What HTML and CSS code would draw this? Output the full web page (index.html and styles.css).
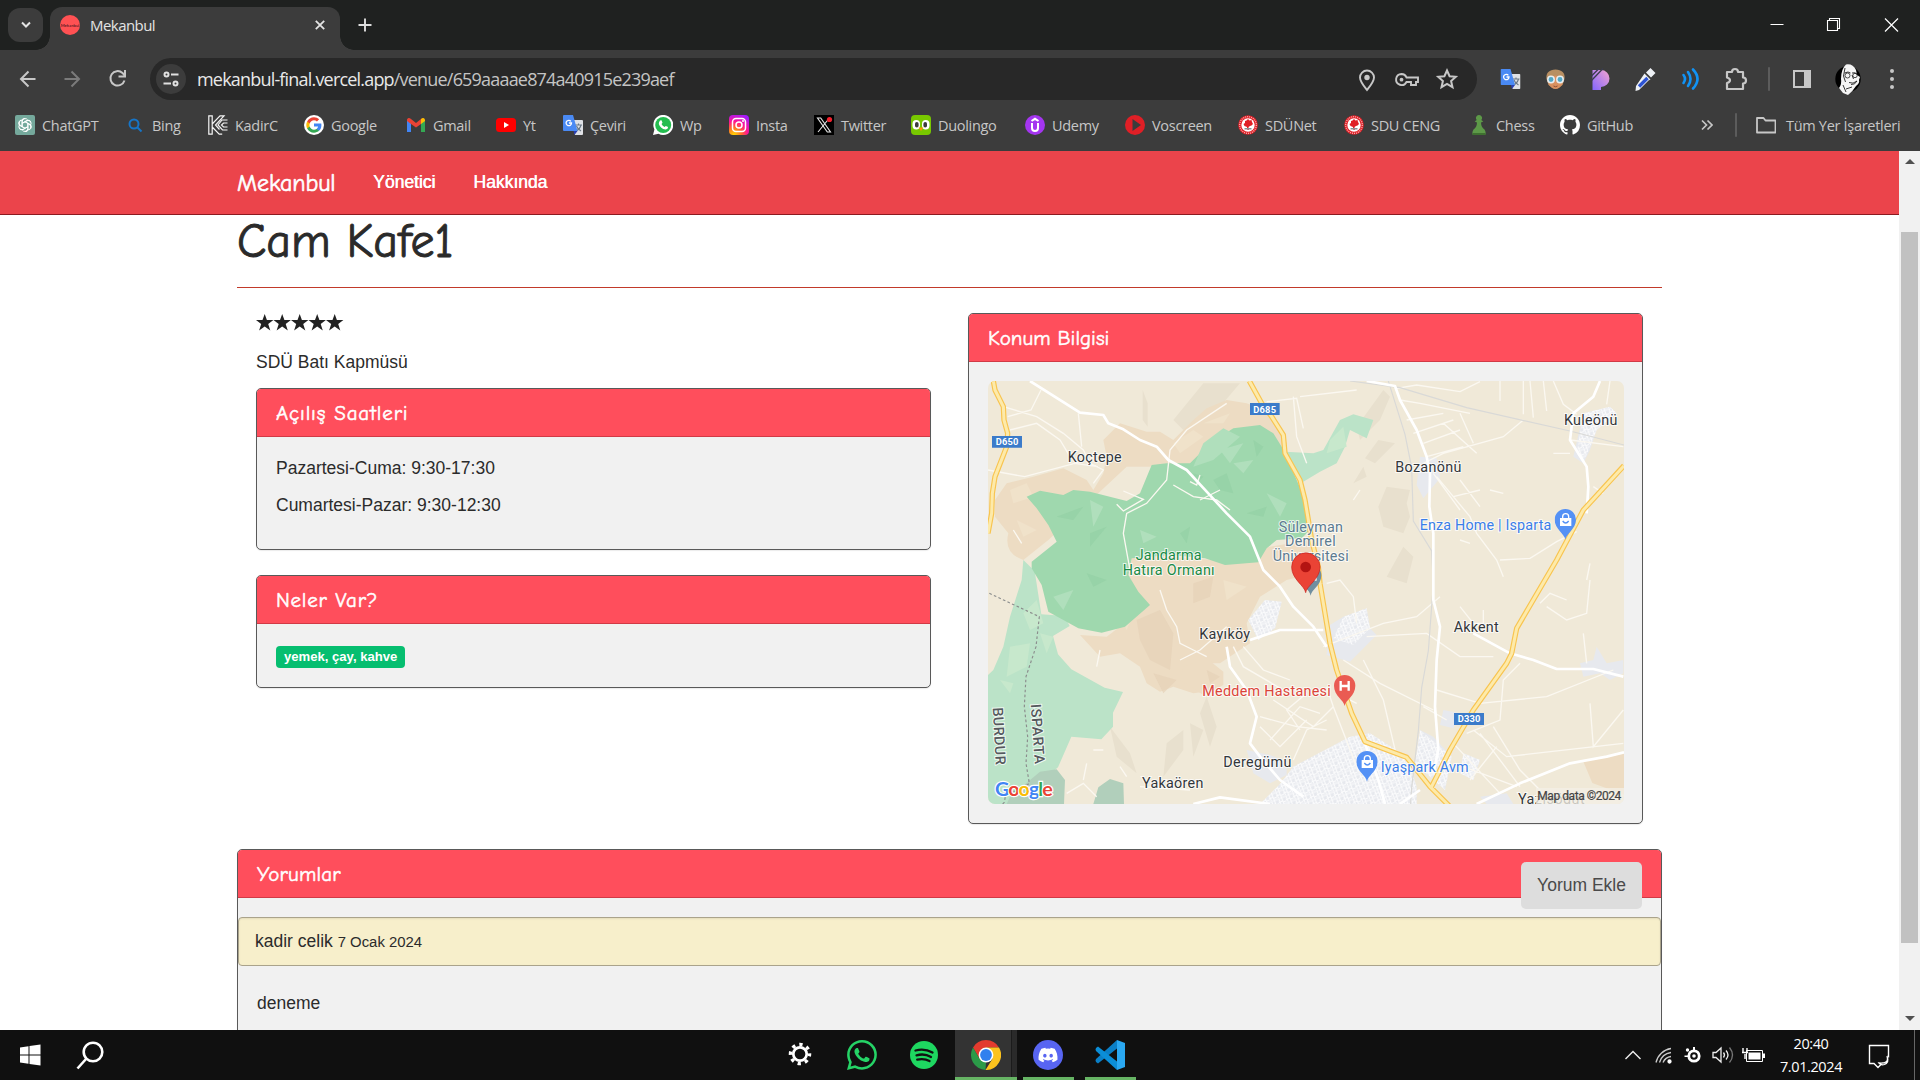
FILE: index.html
```html
<!DOCTYPE html>
<html lang="tr">
<head>
<meta charset="utf-8">
<title>Mekanbul</title>
<link rel="stylesheet" href="styles.css">
</head>
<body>
<svg width="0" height="0" class="defs">
  <symbol id="translate" viewBox="0 0 20 20">
    <path d="M9 5h10a1 1 0 0 1 1 1v13a1 1 0 0 1-1 1h-7z" fill="#dfe1e5"/>
    <path d="M12 10h7M15.5 8.500v1.500M13 16q4-2 5-6M13.500 11q1 3 4.500 5" stroke="#6a7886" stroke-width="1.100" fill="none"/>
    <path d="M1 0h9l4.500 16H1a1 1 0 0 1-1-1V1a1 1 0 0 1 1-1z" fill="#4a8af4"/>
    <path d="M10.500 16h4l-3 4z" fill="#2a3fb0"/>
    <path d="M7.900 6.300A2.700 2.700 0 1 0 8.500 8H6" stroke="#fff" stroke-width="1.300" fill="none"/>
  </symbol>
  <symbol id="sdu" viewBox="0 0 20 20">
    <circle cx="10" cy="10" r="9.800" fill="#e01f26"/><circle cx="10" cy="10" r="8.300" fill="none" stroke="#f6b3b4" stroke-width="1.300" stroke-dasharray="1 1"/>
    <circle cx="10" cy="10" r="6.700" fill="#fff"/>
    <path d="M10 4l1.500 1.500 2-.5.5 2 1 2-1.500 1.500L12 11l-1.500 1 .5 3-2-.5V12L6.500 11 5.500 9l1.500-1V6l1.500-.5z" fill="#e01f26"/>
    <path d="M6.500 13h7v1.500h-7z" fill="#8b8f94"/>
  </symbol>
  <symbol id="whatsapp" viewBox="0 0 16 16"><path d="M13.601 2.326A7.854 7.854 0 0 0 7.994 0C3.627 0 .068 3.558.064 7.926c0 1.399.366 2.760 1.057 3.965L0 16l4.204-1.102a7.933 7.933 0 0 0 3.790.965h.004c4.368 0 7.926-3.558 7.930-7.930A7.898 7.898 0 0 0 13.600 2.326zM7.994 14.521a6.573 6.573 0 0 1-3.356-.92l-.24-.144-2.494.654.666-2.433-.156-.251a6.560 6.560 0 0 1-1.007-3.505c0-3.626 2.957-6.584 6.591-6.584a6.560 6.560 0 0 1 4.660 1.931 6.557 6.557 0 0 1 1.928 4.660c-.004 3.639-2.961 6.592-6.592 6.592zm3.615-4.934c-.197-.099-1.170-.578-1.353-.646-.182-.065-.315-.099-.445.099-.133.197-.513.646-.627.775-.114.133-.232.148-.43.05-.197-.1-.836-.308-1.592-.985-.59-.525-.985-1.175-1.103-1.372-.114-.198-.011-.304.088-.403.087-.088.197-.232.296-.346.1-.114.133-.198.198-.33.065-.134.034-.248-.015-.347-.05-.099-.445-1.076-.612-1.470-.16-.389-.323-.335-.445-.34-.114-.007-.247-.007-.38-.007a.729.729 0 0 0-.529.247c-.182.198-.691.677-.691 1.654 0 .977.710 1.916.810 2.049.098.133 1.394 2.132 3.383 2.992.470.205.840.326 1.129.418.475.152.904.129 1.246.080.380-.058 1.171-.48 1.338-.943.164-.464.164-.86.114-.943-.049-.084-.182-.133-.38-.232z"/></symbol>
  <symbol id="bagpin" viewBox="0 0 64 92">
    <path d="M32 92C30 74 0 60 0 32a32 32 0 0 1 64 0C64 60 34 74 32 92z" fill="#5491f5"/>
    <path d="M16 27h34v24H16z" fill="#fff"/><path d="M24 30v-7a9 9 0 0 1 18 0v7" fill="none" stroke="#fff" stroke-width="4"/><path d="M24 36q9 12 18 0" fill="none" stroke="#5491f5" stroke-width="4"/>
  </symbol>
</svg>

<header class="tabstrip">
  <button class="tab-search"><svg width="10" height="8" viewBox="0 0 10 8"><path d="M1 1.500l4 4 4-4" fill="none" stroke="#e3e3e3" stroke-width="2"/></svg></button>
  <div class="tab">
    <svg width="20" height="20" viewBox="0 0 20 20"><circle cx="10" cy="10" r="10" fill="#ff5153"/><text x="10" y="11.500" font-size="4.200" font-weight="700" text-anchor="middle" font-family="Lato" fill="#6b1f28">Mekanbul</text></svg>
    <span class="tab-title">Mekanbul</span>
    <svg width="10" height="10" viewBox="0 0 10 10"><path d="M.8.800l8.400 8.400M9.200.800L.8 9.200" stroke="#e3e3e3" stroke-width="1.800"/></svg>
  </div>
  <svg class="newtab" width="14" height="14" viewBox="0 0 14 14"><path d="M7 .5v13M.5 7h13" stroke="#dedede" stroke-width="1.900"/></svg>
  <div class="winbtns">
    <svg viewBox="0 0 56 50"><path d="M21 24.500h13" stroke="#fff"/></svg>
    <svg viewBox="0 0 56 50"><path d="M21 20.500h10v10H21zM23 20v-1.500h10v10h-1.500" fill="none" stroke="#fff" stroke-width="1.100"/></svg>
    <svg viewBox="0 0 56 50"><path d="M21.500 18.500l13 13M34.500 18.500l-13 13" stroke="#fff" stroke-width="1.200"/></svg>
  </div>
</header>

<nav class="toolbar">
  <svg class="tool" viewBox="0 0 44 42"><path d="M29.500 21H15M22.500 13.500L15 21l7.500 7.500" fill="none" stroke="#c7c7c7" stroke-width="2"/></svg>
  <svg class="tool" viewBox="0 0 44 42"><path d="M14.500 21H29M21.500 13.500L29 21l-7.500 7.500" fill="none" stroke="#7b7b7b" stroke-width="2"/></svg>
  <svg class="tool" viewBox="0 0 44 42"><path d="M28.500 22.500a7.200 7.200 0 1 1-2-7.500l2 2M29 12v6.500h-6.500" fill="none" stroke="#c7c7c7" stroke-width="2"/></svg>
  <div class="omnibox">
    <span class="site"><svg width="16" height="16" viewBox="0 0 16 16" fill="none" stroke="#e0e0e0" stroke-width="2"><circle cx="3.500" cy="3.500" r="2"/><path d="M8 3.500h7.500M.5 12.500H8"/><circle cx="12.500" cy="12.500" r="2"/></svg></span>
    <span class="url">mekanbul-final.vercel.app<span class="path">/venue/659aaaae874a40915e239aef</span></span>
    <svg class="omni-icon" viewBox="0 0 40 42"><path d="M20 32c-4-5-7-8.500-7-12.500a7 7 0 0 1 14 0c0 4-3 7.500-7 12.500z" fill="none" stroke="#c7c7c7" stroke-width="1.900"/><circle cx="20" cy="19.500" r="2.700" fill="#c7c7c7"/></svg>
    <svg class="omni-icon" viewBox="0 0 40 42"><path d="M14.500 16a5.500 5.500 0 1 0 5 8H24v3h5v-3h2v-4.500H19.500a5.500 5.500 0 0 0-5-3.500z" fill="none" stroke="#c7c7c7" stroke-width="1.900"/><circle cx="14.500" cy="21.700" r="1.900" fill="#c7c7c7"/></svg>
    <svg class="omni-icon" viewBox="0 0 40 42"><path d="M20 12.500l2.600 5.700 6.200.6-4.700 4.200 1.400 6.200L20 26l-5.500 3.200 1.400-6.200-4.700-4.200 6.200-.6z" fill="none" stroke="#c7c7c7" stroke-width="2"/></svg>
  </div>
  <div class="extensions">
    <svg viewBox="0 0 45 42"><use href="#translate" x="12.500" y="11" width="20" height="20"/></svg>
    <svg viewBox="0 0 45 42"><path d="M13.500 21c-1-6 3-9.500 9-9.500s10 3.500 9 9.500l-2 6q-7 7-14 0z" fill="#b88f62"/><path d="M15.500 20q7-5 14 0v6q-3 5-7 5t-7-5z" fill="#d99160"/><circle cx="18" cy="21.500" r="3.200" fill="#53a8c6" stroke="#e8edf0" stroke-width="1.500"/><circle cx="27" cy="21.500" r="3.200" fill="#53a8c6" stroke="#e8edf0" stroke-width="1.500"/><path d="M20.500 28q2 1.500 4 0" stroke="#914f34" fill="none"/></svg>
    <svg viewBox="0 0 45 42"><defs><linearGradient id="pg" x1="0" y1="1" x2="1" y2="0"><stop offset="0" stop-color="#8465ff"/><stop offset="1" stop-color="#f4a5cf"/></linearGradient></defs><path d="M14.500 12h8.500a8.500 8.500 0 0 1 0 17v3h-8.500z" fill="url(#pg)"/><path d="M13.500 18l7-7M13.500 22.500l11.500-12" stroke="#3b3d4f" stroke-width="1.300"/></svg>
    <svg viewBox="0 0 45 42"><path d="M23 14.500l4.500-4.500 5 5-4.500 4.500zM21.500 15.500l6 6-2 1-9.500 9.500-3.500 1 .5-5z" fill="#eef1f6"/><path d="M24.500 20L16 28.500" stroke="#2d53d4" stroke-width="3.400"/></svg>
    <svg viewBox="0 0 45 42" fill="none" stroke="#1193f5" stroke-width="2.600" stroke-linecap="round"><path d="M15.500 17q3 4 0 8M20 14q5 7 0 14M25 11.500q9 9.500 0 19"/></svg>
    <svg viewBox="0 0 45 42"><path d="M14 14h5a3 3 0 0 1 6 0h5v5.500a2.800 2.800 0 0 1 0 6v5.500H14v-6q3-1 3-2.800t-3-2.700z" fill="none" stroke="#c7c7c7" stroke-width="2.200" stroke-linejoin="round"/></svg>
  </div>
  <span class="divider"></span>
  <svg class="panel-icon" viewBox="0 0 40 42"><path d="M12 13h16v16H12z" fill="none" stroke="#c7c7c7" stroke-width="2"/><path d="M22 13h6v16h-6z" fill="#c7c7c7"/></svg>
  <svg class="avatar" viewBox="0 0 26 32"><ellipse cx="13" cy="16" rx="12.700" ry="13" fill="#000"/><path d="M11 1.500q7-1 10 5.500l1 5 3 2-1 3q1 3-3 6-3 5-8 9l-5-2-4-5q3-4 2-9 0-10 5-14.500z" fill="#f5f5f5"/><path d="M9.500 10q4-2 6 0M17 10q3-1 5 1M17 12l1.500 4M14 19.500q4 2 8-1.500-2 4-6 3.500M10 5L8.500 13l2 6M11 26l6-2M8 22l3 7" stroke="#222" stroke-width=".9" fill="none"/><circle cx="12.500" cy="12.500" r="2.500" fill="none" stroke="#222" stroke-width=".8"/><circle cx="20" cy="12.500" r="2.200" fill="none" stroke="#222" stroke-width=".8"/></svg>
  <svg class="dots" viewBox="0 0 20 42" fill="#c7c7c7"><circle cx="10" cy="13" r="2"/><circle cx="10" cy="21" r="2"/><circle cx="10" cy="29" r="2"/></svg>
</nav>

<div class="bookmarks">
  <a><svg viewBox="0 0 20 20"><rect width="20" height="20" rx="2" fill="#75a99c"/><g fill="none" stroke="#fff" stroke-width="1"><path id="petal" d="M7.200 11.500V6.300a3 3 0 0 1 5.600-1.200M7.200 8.200l4.600-2.600a3 3 0 0 1 4 1.200"/><use href="#petal" transform="rotate(60 10 10)"/><use href="#petal" transform="rotate(120 10 10)"/><use href="#petal" transform="rotate(180 10 10)"/><use href="#petal" transform="rotate(240 10 10)"/><use href="#petal" transform="rotate(300 10 10)"/></g></svg>ChatGPT</a>
  <a><svg viewBox="0 0 20 20" fill="none" stroke="#1675c8" stroke-width="2"><circle cx="9" cy="9" r="4.500"/><path d="M12.500 12.500l4 4"/></svg>Bing</a>
  <a><svg viewBox="0 0 20 20" fill="none" stroke="#f5f5f5" stroke-width="1.200"><path d="M.8.800h3.400v18.400H.8zM4.200 9L12 .8h4L7.500 10l4 4.500M4.200 12l7 7.200h3M19.500 5H14l-4 5 4.500 5h5M19.500 8h-4l-2 2 2 2h4"/></svg>KadirC</a>
  <a><svg viewBox="0 0 20 20"><circle cx="10" cy="10" r="10" fill="#fff"/><g transform="translate(1.600 1.600) scale(.7)"><path d="M22.560 12.250c0-.78-.07-1.530-.2-2.250H12v4.260h5.920c-.26 1.370-1.040 2.530-2.210 3.310v2.770h3.570c2.080-1.920 3.280-4.740 3.280-8.090z" fill="#4285f4"/><path d="M12 23c2.970 0 5.460-.98 7.280-2.660l-3.570-2.770c-.98.660-2.230 1.060-3.710 1.060-2.860 0-5.290-1.930-6.160-4.530H2.180v2.840C3.990 20.530 7.700 23 12 23z" fill="#34a853"/><path d="M5.840 14.090c-.22-.66-.35-1.360-.35-2.090s.13-1.430.35-2.090V7.070H2.180C1.430 8.550 1 10.220 1 12s.43 3.450 1.180 4.930z" fill="#fbbc05"/><path d="M12 5.380c1.620 0 3.060.56 4.210 1.640l3.150-3.150C17.450 2.090 14.970 1 12 1 7.700 1 3.990 3.470 2.180 7.070l3.660 2.840c.87-2.600 3.300-4.530 6.160-4.530z" fill="#ea4335"/></g></svg>Google</a>
  <a><svg viewBox="0 0 20 20"><path d="M1 5v12h4V8z" fill="#4285f4"/><path d="M15 8v9h4V5z" fill="#34a853"/><path d="M1 6V4.500Q2.500 2 5 4l5 4 5-4q2-1 3 0l-3 5-5 3.500L5 9z" fill="#ea4335"/><path d="M15 9V4q2.500-2 4 .5V6z" fill="#fbbc05"/></svg>Gmail</a>
  <a><svg viewBox="0 0 20 20"><rect y="3" width="20" height="14" rx="3.500" fill="#f00"/><path d="M8 7l5 3-5 3z" fill="#fff"/></svg>Yt</a>
  <a><svg viewBox="0 0 20 20"><use href="#translate"/></svg>Çeviri</a>
  <a><svg viewBox="0 0 20 20"><path d="M0 20L1.400 14.500A10 10 0 1 1 5.500 18.700z" fill="#fff"/><circle cx="10.200" cy="10" r="8" fill="#23bd4f"/><path d="M7 5.500l1.500-.2 1 2.500-1 1.300q1 2 3 3l1.300-1.200 2.300 1.200q0 2.500-2.600 2.400-5-.7-6.700-5.500Q5.700 7 7 5.500z" fill="#fff"/></svg>Wp</a>
  <a><svg viewBox="0 0 20 20"><defs><radialGradient id="ig" cx=".25" cy="1" r="1.100"><stop offset="0" stop-color="#fd0"/><stop offset=".35" stop-color="#ff6a2b"/><stop offset=".62" stop-color="#ff1493"/><stop offset="1" stop-color="#a21aff"/></radialGradient></defs><rect width="20" height="20" rx="4" fill="url(#ig)"/><rect x="3.500" y="3.500" width="13" height="13" rx="3.500" fill="none" stroke="#fff" stroke-width="1.500"/><circle cx="10" cy="10" r="3" fill="none" stroke="#fff" stroke-width="1.500"/><circle cx="14" cy="6" r="1" fill="#fff"/></svg>Insta</a>
  <a><svg viewBox="0 0 20 20"><path d="M0 0h20v20H0z"/><path d="M3.500 3h3.200l9.800 14h-3.200zM15.500 3L4 17" fill="none" stroke="#e7e7e7" stroke-width="1.100"/><circle cx="15.500" cy="4.500" r="2.600" fill="#f4212e"/></svg>Twitter</a>
  <a><svg viewBox="0 0 20 20"><rect width="20" height="20" rx="4" fill="#78c800"/><rect x="1.500" y="5" width="7.500" height="9.500" rx="3.700" fill="#fff"/><rect x="11" y="5" width="7.500" height="9.500" rx="3.700" fill="#fff"/><rect x="4" y="7" width="3.600" height="5.500" rx="1.800" fill="#3c3c3c"/><rect x="12.400" y="7" width="3.600" height="5.500" rx="1.800" fill="#3c3c3c"/><path d="M7.500 12.500h5L10 16z" fill="#ff9600"/></svg>Duolingo</a>
  <a><svg viewBox="0 0 20 20"><circle cx="10" cy="10" r="10" fill="#a435f0"/><path d="M7 8v5q0 3 3 3t3-3V8M6.500 6L10 3.800 13.500 6" fill="none" stroke="#fff" stroke-width="2"/></svg>Udemy</a>
  <a><svg viewBox="0 0 20 20"><circle cx="10" cy="10" r="10" fill="#e01f26"/><path d="M7.500 4l8.500 6-8.500 6z" fill="#3c3c3c"/></svg>Voscreen</a>
  <a><svg viewBox="0 0 20 20"><use href="#sdu"/></svg>SDÜNet</a>
  <a><svg viewBox="0 0 20 20"><use href="#sdu"/></svg>SDU CENG</a>
  <a><svg viewBox="0 0 20 20"><path d="M10 0a3 3 0 0 1 2.300 5l2 1.500-2.300 1q.2 5 3.500 7 1.500 2 1 5h-13q-.5-3 1-5 3.300-2 3.500-7l-2.300-1 2-1.500A3 3 0 0 1 10 0z" fill="#5d9948"/><path d="M3.500 18h13v2h-13z" fill="#3f7030"/></svg>Chess</a>
  <a><svg viewBox="0 0 16 16"><path fill="#fff" d="M8 0C3.580 0 0 3.580 0 8c0 3.540 2.290 6.530 5.470 7.590.4.070.55-.17.55-.38 0-.19-.01-.82-.01-1.490-2.010.37-2.530-.49-2.690-.94-.09-.23-.48-.94-.82-1.130-.28-.15-.68-.52-.01-.53.630-.01 1.080.58 1.230.82.720 1.210 1.870.87 2.330.66.070-.52.280-.87.510-1.070-1.780-.2-3.640-.89-3.640-3.950 0-.87.310-1.590.82-2.150-.08-.2-.36-1.020.08-2.120 0 0 .67-.21 2.200.82.640-.18 1.320-.27 2-.27.680 0 1.360.09 2 .27 1.530-1.040 2.200-.82 2.200-.82.440 1.100.16 1.920.08 2.120.510.56.82 1.270.82 2.150 0 3.070-1.870 3.750-3.650 3.950.29.25.54.73.54 1.480 0 1.070-.01 1.930-.01 2.200 0 .21.15.46.55.38A8.013 8.013 0 0 0 16 8c0-4.420-3.580-8-8-8z"/></svg>GitHub</a>
  <svg class="more" viewBox="0 0 12 12"><path d="M1 1.500L5.500 6 1 10.500M6.500 1.500L11 6l-4.500 4.500" fill="none" stroke="#c7c7c7" stroke-width="1.700"/></svg>
  <span class="divider"></span>
  <a class="all"><svg viewBox="0 0 20 20"><path d="M1 3h6.500l2 2.500h10V17.500H1z" fill="none" stroke="#c7c7c7" stroke-width="1.800" stroke-linejoin="round"/></svg>Tüm Yer İşaretleri</a>
</div>

<div class="viewport">
  <main class="page">
    <nav class="navbar"><div class="container nav-inner">
      <a class="brand">Mekanbul</a><a class="navlink">Yönetici</a><a class="navlink">Hakkında</a>
    </div></nav>
    <div class="container">
      <h1>Cam Kafe1</h1>
      <div class="venue">
        <div class="info">
          <svg class="stars" width="88" height="17" viewBox="0 0 88 17"><defs><path id="star" d="M8.700 0l2.200 5.900h6.500l-5.200 4 2.100 6.700-5.600-4-5.600 4 2.100-6.700-5.200-4h6.500z"/></defs><g fill="#222"><use href="#star"/><use href="#star" x="17.500"/><use href="#star" x="35"/><use href="#star" x="52.500"/><use href="#star" x="70"/></g></svg>
          <p class="address">SDÜ Batı Kapmüsü</p>
          <section class="panel hours"><h2>Açılış Saatleri</h2><div class="panel-body"><p>Pazartesi-Cuma: 9:30-17:30</p><p>Cumartesi-Pazar: 9:30-12:30</p></div></section>
          <section class="panel foods"><h2>Neler Var?</h2><div class="panel-body"><span class="label">yemek, çay, kahve</span></div></section>
        </div>
        <section class="panel location"><h2>Konum Bilgisi</h2><div class="panel-body">
          <svg class="map" viewBox="84 243 1908 1269" preserveAspectRatio="none">
            <defs><pattern id="streets" width="23" height="21" patternUnits="userSpaceOnUse" patternTransform="rotate(-22)"><path d="M0 3h23M0 13h13M13 0v21M4 3v18M13 17h10" fill="none" stroke="#fff" stroke-width="3.500"/></pattern></defs>
            <path fill="#f0e9d8" d="M84 243h1908v1269H84z"/>
            <g fill="#e8e0ce">
              <path d="M640 360l90-110h110l-60 70-110 70zM548 270l15 40v70l-15-20zM1270 270l-80 110 10 40 60-60 30-70zM1280 560l70 10-10 40 10 40-20 50-60-20-15-60zM1255 420l50 10-60 60-30-15zM1330 740l30 30-20 80-60-20zM450 1280l60 80 20 60-60-50zM620 1330l50-40v60l-60 80zM740 1190l30 90-20 60-30-100zM690 1270l40 20-30 80zM1210 500l10 30-40 20z"/>
            </g>
            <g fill="#eddcc3">
              <path d="M105 600L140 550l80-20 90-25 70 35 20 30 30-50 10-50-10-50 50-50 80 25h40l40 25 60-60 40-35 60-25 60 10 80 30 40 90-10 70H500L265 720l-75 60q-60-20-45-80l-40-50z"/>
              <path d="M480 790l10-30 270 20 170-40 120-20 10 100-80 20-80 50-40 80 10 60-90 60h-60l70 60-20 20-70 10-60-20-40 15-40-25-20-50-60-40-60 10-60-65 80 5 105-80-35-40z"/>
              <path d="M670 1100l70-25 50 40v40l-60 30-70-45zM1870 1385l122-28v127l-95-35z"/>
            </g>
            <g fill="#e6d2b8" opacity=".7"><path d="M530 960l70-30 40 70-10 110-60-30-30-60zM700 850l60-20-10 60-50 20zM580 1120l70 20-40 40zM740 1110l40 20-30 20z"/></g>
            <g fill="#f0e2ca"><path d="M640 430l60-40 30 20-70 50zM150 570l50-20 20 40-60 20zM170 660l60 30-40 20zM730 370l80-30-20 30zM790 840l70 20-60 40zM480 950l40-10-20 50z"/></g>
            <path fill="#bbe3c8" d="M190 780l-5 60-35 110-20 90-30 70-16 15v387h60l90-60 60-50 40-92 90 8 35-38v-42l30-62-55-13-100-55-40-45-15-55 50-30-15-30-70-5-20-130zM975 455l85 5 30-10 25-45 25-45 40-17 60 17-20 55-50-25-15 50-25 50-50 25-50 30-30-30z"/>
            <path fill="#9fd8ae" d="M200 590l40-18 70 13 30-15 50 5 110 28 40-23 35-85 45-5h70l50-50 40-30 40-25 80-10 40 25 25 40 20 40 25 60 30 70 10 80-25 25-75 5-30 25-25 42-100 8-60-20-100-10-120 10-10 50 30 50 35 40-75 65-70 18-70-13-90-50-20-80-30-50v-20l75-60-25-50-35-50z"/>
            <g fill="#8fcda1" opacity=".5"><path d="M760 540l40-20 20 60-40-10zM660 700l30-20-10 50zM860 640l60-20-10 30zM880 420l30 20-20 30zM290 650l80-30-30 40zM390 700l50-20-50 60zM380 820l60 20-40 20zM700 520l30 10-20 20z"/></g>
            <g fill="#b0dfbc"><path d="M700 500l30-70 60-45 50 25-80 70zM780 450l70-20-40 60zM820 490l60-10-30 40zM390 600l40 20-30 60zM540 690l50 20-40 20zM280 890l60-20-30 60zM920 580l60 30-20 40z"/></g>
            <g fill="#c7e8cc"><path d="M150 1040l60-10-10 70-60 30zM190 940l40-40 20 70-40 20zM240 1000l40 10-20 50zM1110 420l40-40 10 60-60 20zM120 1140l40 10-10 30z"/></g>
            <path fill="#b1cfbb" d="M150 1490l90-75 50-7 25 32-3 72H140zM400 1512l15-50 35-25 40 13 2 62z"/>
            <g fill="#e7e9ee">
              <path d="M865 960l50-60 50 5-10 40-10 40-50 35zM1150 950l70-25 10 60 20 20-80 80-70-20 10-90zM860 1350l70 15 50 20v40l-50 25-50-30zM1000 1400l170-90 60-10 110 70 30 90v52H900l60-60zM1380 1290l40 20 55 60-20 100-90-80zM1450 1230l50 10-20 45-40-10zM1510 1360l50 20-20 60-40-20zM1560 1490l80-10 20 32h-80zM1860 1090l40-10 10-40 30 50 50-10v40l-40 20-30-20-50 10zM1870 340l80-20 20 20-60 50-20 60-20 40-30-20zM1380 470l50 5 10 60-50 60-20-40z"/>
            </g>
            <g fill="url(#streets)" opacity=".8"><path d="M865 960l50-60 50 5-20 80-50 35zM1150 950l70-25 10 60-50 50-60-20zM1000 1400l170-90 60-10 110 70 30 90v52H900l60-60zM1380 1290l95 80-20 100-90-80zM1870 340l80-20 20 20-60 50-40 100-20-30zM1510 1360l50 20-20 60-40-20z"/></g>
            <g fill="none" stroke="#fbf8f1" stroke-width="4">
              <path d="M130 320l100 30 80 50 60 50 20 40 40 20-30 40M243 270l-30 60-70 20M355 340l10 100M84 510l110 20 150-40 70 10M150 390l80-20 70 50 30 50M800 310L680 390l-50 60-10 90-60 70-60 30-10 60 20 110 60 20M600 870l20 60 30 50 10 50 40 20 40 20M660 1080l60-30 80-70M490 573l60 25-60 35-20-20M640 555l60 35 70 10 40 30M1000 290l10 120 30 80M920 305l90-10 20 90M1020 290l170-20M690 545l20 10 10-30M720 600l60-30M900 1250l110 30 90 10M850 1040l60 70 80 30M820 1040l30 60 120 70M940 1200l120 80 60-60M900 1280l60 60 80-80M1000 1380l40-90 60-30M930 1320l90-100 60 20M1040 1180l-60 50 40 60"/>
              <path d="M1310 265l60-10 130 20 60-30M1320 300l60 10 150 30M1340 360l110-20M1360 400l120-40M1390 430l110-40M1400 470l110-30M1450 370l100 90M1500 340l40 90M1690 360l-60 50-180 50-60 30M1620 243v60M1690 243v100M1710 243l10 110M1750 243l10 90M1780 243l30 70 40 30M1830 420l160 20M1950 243l-10 70M1830 460l-50 0M1430 530l50 60 50 60 20 50 60 80 20 50M1420 520l80 110M1500 540l60 80M1480 590l80-20M1620 780l90-5 80-50 60-30M1090 1040l180-70 100-20 70-60M1220 1010l180-10 100 70h100M1150 1080l110 70 160 80M1210 1080l60 120 40 170M1430 1170l130 40 200-20 200-80M1520 1300l100-40 10-120 50-50M1540 1290l100 80 350-40M1480 1330l140 150M1560 1300l120 160M1510 1400l160 60M1530 1440l80-100M1600 1280l80 130 80 80M1890 1210l10 130 90-110M1760 920l60 40 60-20 10-100M1740 910l30-30 50 20M1880 840l10-50M1500 920l40 50 30 0 0-40M1870 1000l10 90M1100 1160l20 60 70 180M1130 1180l60 30M1390 1220l70 40M1100 850l40-10 40 50 10 80"/>
              <path d="M160 690l25 40M400 1350l30 0M380 1390l-10 50M320 1480l50-30 40 40M410 1100l10-50M540 1460l150 10M500 1430l-20-30M1180 600l20-30M1590 570l40 10M1900 560l30 20M1500 720l30 10"/>
            </g>
            <g fill="none" stroke="#d9d9d7" stroke-width="3.500"><path d="M1170 243l150 20 200 60 310 70 162 42M1285 243l50 160 20 100 5 160 55 90 5 100-15 200-20 110-10 130-20 170-5 80"/></g>
            <g fill="none" stroke="#fff" stroke-width="8" stroke-linejoin="round">
              <path d="M210 243l150 95 70 7 15 25 45 18 50 32 50 20 35 40 55 30 60 65 60 65 70 70 40 100 50 50 40 60 60 60 40 60M1220 243l85 15 15 42 50 90 30 80 10 50-2 100 12 80v200l20 80-10 100-5 140 10 130-15 70M1920 243l-20 47-60 50-10 80 50 80 5 60-5 80M800 1040l10 60 50 70 30 80-20 80 30 40 60 70 70 50M870 1020l90-30h130M1540 1000l110 60 70 20 70 27h110l90 23M1550 1512l130-62 150-60 110-20 52-13M1215 1330l40 110 20 72M700 1512l80-20 150 20M1380 1470l-60 42"/>
            </g>
            <g fill="none" stroke-linejoin="round">
              <g stroke="#f8c44f" stroke-width="16"><path id="main-roads" d="M100 243l5 27 25 50 2 40 11 40-3 40-35 90-8 50-2 60-11 60M868 243l37 67 30 40 35 55 5 55 45 80 15 60 10 60 10 60 20 80 5 50 15 90 15 90 20 80 45 130 40 85 125 47 70 88 60 60M1992 497l-122 133-80 150-120 205-15 75-15 30-100 140-70 120-40 80-18 35"/></g>
              <g stroke="#fdeaaa" stroke-width="9"><path d="M100 243l5 27 25 50 2 40 11 40-3 40-35 90-8 50-2 60-11 60M868 243l37 67 30 40 35 55 5 55 45 80 15 60 10 60 10 60 20 80 5 50 15 90 15 90 20 80 45 130 40 85 125 47 70 88 60 60M1992 497l-122 133-80 150-120 205-15 75-15 30-100 140-70 120-40 80-18 35"/></g>
            </g>
            <path d="M88 880l150 70-10 90-30 90-5 90 10 90-5 80 10 60-30 22-40 5-5 30-30 30" fill="none" stroke="#8b8d8d" stroke-width="3.500" stroke-dasharray="8 7"/>
            <g fill="#3b7bca"><path d="M870 309h89v36h-89zM96 408h90v35H96zM1482 1239h90v36h-90z"/></g>
            <g class="shield"><text x="880" y="338" textLength="68">D685</text><text x="107" y="435" textLength="68">D650</text><text x="1493" y="1267" textLength="68">D330</text></g>
            <g class="place">
              <text x="323" y="485" textLength="162">Koçtepe</text><text x="1812" y="376" textLength="160">Kuleönü</text><text x="1306" y="515" textLength="198">Bozanönü</text><text x="718" y="1017" textLength="152">Kayıköy</text><text x="1481" y="995" textLength="135">Akkent</text><text x="790" y="1402" textLength="204">Deregümü</text><text x="546" y="1464" textLength="184">Yakaören</text><text x="1674" y="1512" textLength="200">Yazısöğüt</text>
              <g fill="#188a45"><text x="527" y="780" textLength="198">Jandarma</text><text x="488" y="824" textLength="276">Hatıra Ormanı</text></g>
              <g fill="#5c7b90"><text x="956" y="695" textLength="193">Süleyman</text><text x="975" y="739" textLength="152">Demirel</text><text x="938" y="783" textLength="228">Üniversitesi</text></g>
              <g fill="#3a7ee8"><text x="1379" y="691" textLength="395">Enza Home | Isparta</text><text x="1262" y="1416" textLength="264">Iyaşpark Avm</text></g>
              <text x="727" y="1188" textLength="385" fill="#db4439">Meddem Hastanesi</text>
              <g fill="#55595d" class="province"><text transform="translate(98 1223) rotate(87)" textLength="172">BURDUR</text><text transform="translate(212 1213) rotate(86)" textLength="180">ISPARTA</text></g>
            </g>
            <use href="#bagpin" x="1784" y="627" width="64" height="92"/><use href="#bagpin" x="1189" y="1353" width="64" height="92"/>
            <path d="M1154 1218c-2-18-32-30-32-61a32 32 0 0 1 64 0c0 31-30 43-32 61z" fill="#ea5b52"/><path d="M1142 1143v29M1166 1143v29M1142 1158h24" stroke="#fff" stroke-width="7"/>
            <path d="M1052 887c-2-18-32-30-32-61a32 32 0 0 1 64 0c0 31-30 43-32 61z" fill="#708fa0"/><path d="M1060 830h10v12h-10z" fill="#fff"/>
            <path d="M1037 878c-2-20-42-40-42-77a42 42 0 0 1 85 0c0 37-41 57-43 77z" fill="#ea4335" stroke="#c5221f" stroke-width="2"/><circle cx="1037" cy="801" r="16" fill="#b31412"/>
            <path d="M1728 1464h264v48h-264z" fill="#f3efe5" opacity=".78"/><text class="copyright" x="1732" y="1499" textLength="252">Map data ©2024</text>
            <text class="google" x="105" y="1489" textLength="173"><tspan fill="#4285f4">G</tspan><tspan fill="#ea4335">o</tspan><tspan fill="#fbbc05">o</tspan><tspan fill="#4285f4">g</tspan><tspan fill="#34a853">l</tspan><tspan fill="#ea4335">e</tspan></text>
          </svg>
        </div></section>
      </div>
      <section class="panel comments"><h2>Yorumlar</h2><a class="add">Yorum Ekle</a>
        <div class="comment-head">kadir celik <small>7 Ocak 2024</small></div>
        <p class="comment-text">deneme</p>
      </section>
    </div>
  </main>
  <div class="scrollbar"><span class="arrow up"></span><span class="thumb"></span><span class="arrow down"></span></div>
</div>

<footer class="taskbar">
  <div class="start">
    <svg viewBox="0 0 60 50" fill="#fff"><path d="M20 17.500l8.500-1.300v8.300H20zM29.500 16L40.500 14.500v10h-11zM20 25.500h8.500v8.300L20 32.500zM29.500 25.500h11v10l-11-1.500z"/></svg>
    <svg viewBox="0 0 60 50" fill="none" stroke="#fff" stroke-width="2.600"><circle cx="33" cy="22" r="9.300"/><path d="M26 29l-8.500 9.500"/></svg>
  </div>
  <div class="apps">
    <div class="app"><svg width="24" height="24" viewBox="0 0 24 24"><circle cx="12" cy="12" r="6.700" fill="none" stroke="#fff" stroke-width="2.700"/><circle cx="12" cy="12" r="9.500" fill="none" stroke="#fff" stroke-width="3.500" stroke-dasharray="3.300 4.161" stroke-dashoffset="1"/></svg></div>
    <div class="app"><svg width="30" height="30" fill="#25d366"><use href="#whatsapp"/></svg></div>
    <div class="app"><svg width="28" height="28" viewBox="0 0 28 28"><circle cx="14" cy="14" r="14" fill="#1ed760"/><path d="M5.500 9.500q9-2.500 17 2M6.500 14.300q8-2.200 14.500 1.700M7.200 18.600q7-1.600 12.300 1.500" fill="none" stroke="#111" stroke-width="2.300" stroke-linecap="round"/></svg></div>
    <div class="app active"><svg width="30" height="30" viewBox="0 0 30 30"><path d="M15 0a15 15 0 0 1 13 7.500H15L8.500 18.700 2 7.500A15 15 0 0 1 15 0z" fill="#e33b2e"/><path d="M2 7.500l6.500 11.300 6.500 3.700-.5 7.500A15 15 0 0 1 2 7.500z" fill="#2b9a48"/><path d="M28 7.500A15 15 0 0 1 14.500 30l7-11.200L15 7.500z" fill="#fcc31e"/><circle cx="15" cy="15" r="7.400" fill="#fff"/><circle cx="15" cy="15" r="5.900" fill="#3180ee"/></svg></div>
    <div class="app open"><svg width="30" height="30" viewBox="0 0 30 30"><circle cx="15" cy="15" r="15" fill="#5865f2"/><path transform="translate(5.500 5.400) scale(1.190)" fill="#fff" d="M13.545 2.907a13.227 13.227 0 0 0-3.257-1.011.05.05 0 0 0-.052.025c-.141.250-.297.577-.406.833a12.190 12.190 0 0 0-3.658 0 8.258 8.258 0 0 0-.412-.833.051.051 0 0 0-.052-.025c-1.125.194-2.220.534-3.257 1.011C.356 6.024-.213 9.047.066 12.032a13.276 13.276 0 0 0 4.016 2.057c.308-.42.640-.93.874-1.399a8.875 8.875 0 0 1-1.296-.665l.323-.286c2.619 1.196 5.454 1.196 8.041 0l.333.286a8.254 8.254 0 0 1-1.249.665c.240.465.515.979.817 1.399a13.235 13.235 0 0 0 4.001-2.057c.334-3.451-.559-6.449-2.381-9.125zM5.347 10.214c-.789 0-1.438-.724-1.438-1.612 0-.889.637-1.613 1.438-1.613.807 0 1.450.730 1.438 1.613 0 .888-.637 1.612-1.438 1.612zm5.316 0c-.788 0-1.438-.724-1.438-1.612 0-.889.637-1.613 1.438-1.613.807 0 1.451.730 1.438 1.613 0 .888-.631 1.612-1.438 1.612z"/></svg></div>
    <div class="app open"><svg width="30" height="30" viewBox="0 0 30 30"><path d="M22 0L1 19q-1 1.500 0 3l2 1.500 19-15z" fill="#0a7fc7"/><path d="M22 30L1 11q-1-1.500 0-3l2-1.500 19 15z" fill="#0b8ed8"/><path d="M22 0l8 3v24l-8 3z" fill="#2aa8f2"/></svg></div>
  </div>
  <div class="tray">
    <svg viewBox="0 0 30 50"><path d="M7.500 29l7.500-7.500 7.500 7.500" fill="none" stroke="#eee" stroke-width="1.400"/></svg>
    <svg viewBox="0 0 30 50" fill="none" stroke="#ccc" stroke-width="1.300"><path d="M8 32.500A18 18 0 0 1 23 18.500M11.500 32.500A14 14 0 0 1 23 22.500M15 32.500A10 10 0 0 1 23 26.500"/><circle cx="21.500" cy="31.500" r="1.500" fill="#fff" stroke="#fff"/></svg>
    <svg viewBox="0 0 30 50"><circle cx="16" cy="26" r="5.200" fill="none" stroke="#fff" stroke-width="2.800"/><circle cx="16" cy="26" r="1.800" fill="#fff"/><path d="M15 17h2v4h-2z" fill="#fff"/><circle cx="9.500" cy="20" r="1.700" fill="#fff"/><path d="M6.500 25.500h5v1.500h-5z" fill="#fff"/></svg>
    <svg viewBox="0 0 30 50" fill="none" stroke="#eee" stroke-width="1.300"><path d="M5 22.500h3l5-4.500v14l-5-4.500H5z"/><path d="M15.500 22.500q2 2.500 0 5M18 20.500q4 4.500 0 9"/><path d="M21.500 17.500q6 7.500 0 15" stroke="#777"/></svg>
    <svg viewBox="0 0 30 50"><path d="M8.500 20.500h16v11H8.500z" fill="none" stroke="#fff"/><path d="M10.500 22.500h12v7h-12zM25 23.500h2v4.500h-2z" fill="#fff"/><path d="M5 18v4M9 18v4M4 22.500h6M7 24v5" stroke="#fff" stroke-width="1.400"/></svg>
  </div>
  <div class="clock"><span>20:40</span><span>7.01.2024</span></div>
  <svg class="notify" viewBox="0 0 40 50"><path d="M26 34.500h-3l-4 4-4-4h-4.500v-18h19v12" transform="translate(0 -1)" fill="none" stroke="#fff" stroke-width="1.400"/><path d="M28 26q2.500 8-8 7 2 2.500 5.500 1.500 5-2 2.500-8.500z" fill="#111" stroke="#fff" stroke-width="1.300"/></svg>
  <span class="show-desktop"></span>
</footer>
</body>
</html>
```
FILE: styles.css
```css
* { box-sizing: border-box; }
body { margin: 0; height: 1080px; display: flex; flex-direction: column; overflow: hidden; background: #fff; font-family: "Segoe UI", "Open Sans", "Noto Sans", sans-serif; }
svg { flex: none; display: block; }
.defs { position: absolute; }

/* tab strip */
.tabstrip { height: 50px; flex: none; display: flex; background: #1f2120; padding-left: 8px; }
.tab-search { width: 35px; height: 34px; margin: 8px 7px 0 0; padding: 0; border: 0; border-radius: 12px; background: #3c3c3c; display: flex; align-items: center; justify-content: center; }
.tab { width: 290px; height: 43px; margin-top: 7px; padding: 0 15px 8px 10px; display: flex; align-items: center; gap: 10px; border-radius: 12px 12px 0 0; background: #3c3c3c; position: relative; }
.tab::before, .tab::after { content: ""; position: absolute; bottom: 0; width: 14px; height: 14px; }
.tab::before { left: -14px; background: radial-gradient(circle at 0 0, transparent 13.500px, #3c3c3c 14px); }
.tab::after { right: -14px; background: radial-gradient(circle at 100% 0, transparent 13.500px, #3c3c3c 14px); }
.tab-title { flex: 1; font-size: 15px; letter-spacing: -.55px; color: #e3e3e3; }
.newtab { margin: 18px 0 0 18px; }
.winbtns { margin-left: auto; display: flex; }
.winbtns svg { width: 57px; height: 50px; }

/* toolbar */
.toolbar { height: 58px; flex: none; display: flex; align-items: center; background: #3c3c3c; padding: 0 0 0 6px; }
.tool { width: 44px; height: 42px; }
.tool:nth-child(3) { margin-left: 2px; }
.omnibox { width: 1327px; height: 42px; margin-left: 10px; padding: 0 10px 0 6px; border-radius: 21px; background: #282828; display: flex; align-items: center; }
.site { width: 30px; height: 30px; border-radius: 15px; background: #3c3c3c; display: flex; align-items: center; justify-content: center; }
.url { flex: 1; margin-left: 11px; font-size: 18px; letter-spacing: -.81px; color: #e8e8e8; }
.path { color: #c4c4c4; }
.omni-icon { width: 40px; height: 42px; }
.extensions { display: flex; margin-left: 11px; }
.extensions svg { width: 45px; height: 42px; }
.divider { width: 2px; height: 24px; border-radius: 1px; background: #5c5c5c; }
.toolbar .divider { margin-left: 10px; }
.panel-icon { width: 40px; height: 42px; margin-left: 12px; }
.avatar { width: 26px; height: 32px; margin-left: 13px; }
.dots { width: 20px; height: 42px; margin-left: 21px; }

/* bookmarks bar */
.bookmarks { height: 42px; flex: none; padding: 0 0 8px 15px; background: #3c3c3c; display: grid; align-items: center; grid-template-columns: 110px 83px 96px 102px 90px 67px 90px 76px 85px 97px 114px 100px 113px 106px 125px 91px 141px 34px 21px 1fr; color: #c7c7c7; font-size: 14.500px; letter-spacing: -.3px; white-space: nowrap; border-bottom: 0; }
.bookmarks a { display: flex; align-items: center; gap: 7px; }
.bookmarks a svg { width: 20px; height: 20px; }
.bookmarks .all { gap: 10px; }
.bookmarks .more { width: 12px; height: 12px; }

/* web page */
.viewport { height: 880px; flex: none; display: flex; overflow: hidden; border-top: 1px solid #3c3c3c; }
.page { width: 1899px; height: 879px; overflow: hidden; font: 17.500px/25px "Liberation Sans", Arial, sans-serif; color: #2b2b2b; }
.container { width: 1425px; margin: 0 auto; }
.navbar { height: 64px; background: #eb444b; border-bottom: 1px solid #8c1a20; }
.nav-inner { display: flex; padding-top: 18px; color: #fff; }
.brand, h1, h2 { font-family: "Comic Sans MS", "Comic Neue", Lato, cursive; }
.brand { width: 136px; font-size: 24px; line-height: 28px; letter-spacing: -.1px; -webkit-text-stroke: .6px #fff; }
.navlink { margin-right: 38px; line-height: 26px; letter-spacing: 0; text-shadow: .6px 0 #fff; }
h1 { margin: 0 0 25px; padding: 1px 0 19px 0; border-bottom: 1px solid #c23a2a; font-weight: 400; font-size: 48px; line-height: 52px; letter-spacing: -.1px; color: #2a2a2a; -webkit-text-stroke: .9px #2a2a2a; }
.venue { display: flex; gap: 37px; padding: 0 19px; align-items: flex-start; }
.info { width: 675px; }
.stars { margin: 1px 0 0; }
.address { margin: 19px 0 13px; line-height: 25px; }
.panel { border: 1px solid #595959; border-radius: 5px; background: #f1f1f1; box-shadow: 0 1px 1px rgba(0, 0, 0, .08); }
h2 { margin: 0; height: 48px; padding: 0 19px; border-bottom: 1px solid #d13a46; border-radius: 4px 4px 0 0; background: #ff4e5c; color: #fff; font-weight: 400; font-size: 21px; line-height: 48px; -webkit-text-stroke: .5px #fff; }
.hours h2 { letter-spacing: .85px; }
.foods h2 { letter-spacing: .75px; line-height: 49px; }
.panel-body { padding: 19px; }
.hours { height: 162px; margin-bottom: 25px; }
.panel-body p { margin: 0 0 12px; }
.foods { height: 113px; }
.label { display: block; width: 129px; height: 22px; margin-top: 3px; padding-left: 8px; border-radius: 4px; background: #06be70; color: #fff; font-size: 13.100px; font-weight: 700; line-height: 21px; white-space: nowrap; }
.location { width: 675px; height: 511px; }
.map { width: 636px; height: 423px; border-radius: 7px; }
.map text { font-family: Roboto, sans-serif; }
.map .place { font-size: 43px; fill: #33373b; }
.map .place text { paint-order: stroke; stroke: #fff; stroke-opacity: .75; stroke-width: 6px; }
.map .province { font-weight: 500; }
.map .shield text { font-size: 28px; font-weight: 700; fill: #fff; }
.map .copyright { font-size: 36px; fill: #444; stroke: #444; stroke-width: .6px; }
.map .google { font-family: Lato, sans-serif; font-size: 59px; font-weight: 700; paint-order: stroke; stroke: #fff; stroke-width: 7px; }
.comments { height: 300px; margin-top: 25px; position: relative; }
.comments h2 { letter-spacing: .15px; }
.add { position: absolute; top: 12px; right: 19px; width: 121px; height: 47px; border-radius: 5px; background: #ddd; color: #4a4a4a; text-align: center; line-height: 46px; }
.comment-head { height: 49px; margin-top: 19px; padding-left: 16px; border: 1px solid #aaa38b; border-radius: 4px; background: #f7efcb; box-shadow: inset 0 1px 2px rgba(0, 0, 0, .08); line-height: 47px; }
.comment-head small { font-size: 14.900px; }
.comment-text { margin: 25px 19px; }

.scrollbar { width: 21px; background: #f1f1f1; display: flex; flex-direction: column; align-items: center; }
.arrow { border: 5px solid transparent; }
.up { margin-top: 3px; border-bottom: 5px solid #505050; }
.thumb { width: 17px; height: 711px; margin-top: 68px; background: #c1c1c1; }
.down { margin-top: 73px; border-top-color: #505050; }

/* taskbar */
.taskbar { height: 50px; flex: none; display: flex; background: #101010; }
.start { display: flex; }
.start svg { width: 60px; height: 50px; }
.apps { display: flex; margin-left: 649px; }
.app { width: 62px; height: 50px; display: flex; align-items: center; justify-content: center; }
.app:first-child svg { margin-top: -2px; }
.active { width: 62px; border-bottom: 3px solid #66b464; background: linear-gradient(90deg, #333 56px, #1b1b1b 56px, #1b1b1b 57px, #2a2a2a 57px); padding: 3px 1px 0 0; }
.open { position: relative; }
.open::after { content: ""; position: absolute; bottom: 0; left: 6px; width: 51px; height: 3px; background: #66b464; }
.tray { margin-left: auto; display: flex; }
.tray svg { width: 30px; height: 50px; }
.clock { width: 86px; display: flex; flex-direction: column; align-items: center; padding-top: 2px; color: #fff; font-size: 14.500px; line-height: 23px; letter-spacing: -.4px; }
.notify { width: 40px; height: 50px; margin-left: 5px; }
.show-desktop { width: 1px; margin: 0 5px 0 15px; background: #666; }
```
